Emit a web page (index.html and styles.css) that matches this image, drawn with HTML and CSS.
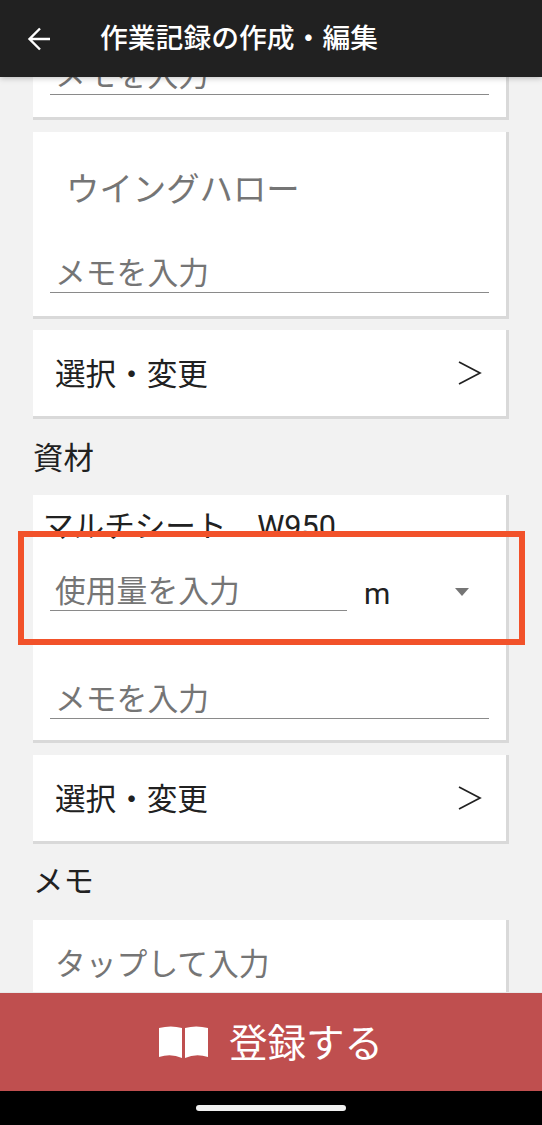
FILE: index.html
```html
<!DOCTYPE html>
<html lang="ja">
<head>
<meta charset="utf-8">
<title>作業記録の作成・編集</title>
<link rel="stylesheet" href="styles.css">
</head>
<body>
<div class="screen">
  <header class="appbar">
    <svg class="back" width="26" height="24" viewBox="0 0 26 24"><path d="M24 12H3.5M14 1.5 3.5 12 14 22.5" fill="none" stroke="#fff" stroke-width="2.4"/></svg>
    <h1 class="title">作業記録の作成・編集</h1>
  </header>
  <main class="scroll">
    <div class="content">
      <section class="card card-memo-top">
        <div class="field">メモを入力</div>
      </section>
      <section class="card card-tool">
        <div class="tool-name">ウイングハロー</div>
        <div class="field">メモを入力</div>
      </section>
      <section class="card card-select">
        <span class="select-text">選択・変更</span>
        <svg class="chev" width="26" height="26" viewBox="0 0 26 26"><path d="M3 2l21 11L3 24" fill="none" stroke="#212121" stroke-width="1.7"/></svg>
      </section>
      <h2 class="label">資材</h2>
      <section class="card card-material">
        <div class="material-name">マルチシート　W950</div>
        <div class="amount-row">
          <div class="field field-amount">使用量を入力</div>
          <div class="unit">m<i class="caret"></i></div>
        </div>
        <div class="field field-material-memo">メモを入力</div>
      </section>
      <section class="card card-select">
        <span class="select-text">選択・変更</span>
        <svg class="chev" width="26" height="26" viewBox="0 0 26 26"><path d="M3 2l21 11L3 24" fill="none" stroke="#212121" stroke-width="1.7"/></svg>
      </section>
      <h2 class="label label-memo">メモ</h2>
      <section class="card card-note">タップして入力</section>
    </div>
    <div class="highlight"></div>
  </main>
  <button class="submit">
    <svg class="book" width="49" height="32" viewBox="0 0 49 32"><path fill="#fff" d="M0 2Q12-1 23 2V32Q12 27 0 31ZM26 2Q37-1 49 2V31Q37 27 26 32Z"/></svg>
    <span>登録する</span>
  </button>
  <footer class="navbar"><span class="pill"></span></footer>
</div>
</body>
</html>
```
FILE: styles.css
```css
* { box-sizing: border-box; }
html, body { margin: 0; padding: 0; }
body {
  width: 542px;
  height: 1125px;
  overflow: hidden;
  font-family: "Roboto", "Noto Sans CJK JP", sans-serif;
  background: #f2f2f2;
}
.screen { display: flex; flex-direction: column; width: 542px; height: 1125px; }
.appbar {
  position: relative;
  z-index: 2;
  flex: none;
  height: 77px;
  display: flex;
  align-items: center;
  padding: 0 0 0 26px;
  background: #212121;
  color: #fff;
  box-shadow: 0 1px 6px rgba(0,0,0,.25);
}
.back { flex: none; margin-top: 0; }
.title { margin: 1px 0 0 48px; font-size: 27.8px; font-weight: 500; line-height: 1; }
.scroll { position: relative; flex: 1; min-height: 0; overflow: hidden; }
.content { margin-top: -60px; padding: 0 33px; }
.card {
  background: #fff;
  border-right: 3px solid #d9d9d9;
  border-bottom: 3px solid #d9d9d9;
  margin-bottom: 12px;
}
.field {
  font-size: 30.8px;
  line-height: 36px;
  color: #757575;
  border-bottom: 1.5px solid #8a8a8a;
  margin: 0 17px;
  padding: 2px 0 0 5px;
}
.card-memo-top { height: 103px; padding-top: 39px; }
.card-tool { height: 187px; padding-top: 36px; margin-bottom: 11px; }
.tool-name { font-size: 33.4px; line-height: 44px; color: #757575; padding-left: 33px; margin-bottom: 42px; }
.card-select {
  height: 89px;
  display: flex;
  align-items: center;
  justify-content: space-between;
  padding: 0 24px 0 22px;
  font-size: 30.6px;
  color: #212121;
  margin-bottom: 0;
}
.select-text { margin-bottom: 3px; }
.chev { flex: none; }
.label { margin: 0; padding-top: 18px; height: 76px; font-size: 30.4px; font-weight: 400; line-height: 44px; color: #212121; }
.card-material { height: 248px; margin-bottom: 12px; padding-top: 10px; }
.material-name { font-size: 30.6px; line-height: 44px; color: #212121; padding-left: 10px; }
.amount-row { display: flex; align-items: flex-start; margin-top: 23px; }
.amount-row .field { margin-right: 0; width: 297px; flex: none; }
.unit { position: relative; flex: 1; font-size: 30px; line-height: 44px; color: #212121; padding-left: 17px; }
.caret {
  position: absolute;
  left: 108px;
  top: 16px;
  border-left: 7px solid transparent;
  border-right: 7px solid transparent;
  border-top: 8px solid #757575;
}
.field-material-memo { margin-top: 63.5px; }
.label-memo { padding-top: 16px; height: 76px; }
.card-note { height: 120px; padding: 23px 0 0 22px; font-size: 30.8px; line-height: 44px; color: #757575; }
.highlight {
  position: absolute;
  left: 18px;
  top: 454px;
  width: 507px;
  height: 114px;
  border: 6px solid #f2522a;
  pointer-events: none;
}
.submit {
  position: relative;
  z-index: 1;
  flex: none;
  height: 99px;
  border: 0;
  border-top: 1px solid #e9e9e9;
  background: #bf4f4f;
  color: #fff;
  display: flex;
  align-items: center;
  justify-content: center;
  gap: 21px;
  font-family: inherit;
  font-size: 38.5px;
  padding: 0 0 4px 0;
}
.book { margin-top: 3px; }
.navbar { flex: none; height: 34px; background: #000; display: flex; justify-content: center; align-items: center; }
.pill { width: 150px; height: 6px; border-radius: 3px; background: #f0f0f0; margin-top: -1px; }
```
